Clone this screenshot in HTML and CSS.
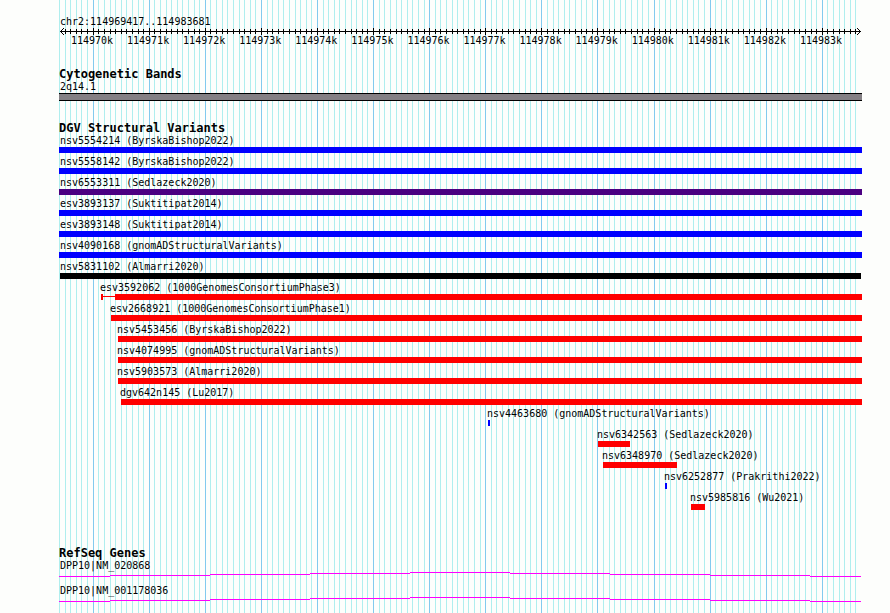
FILE: index.html
```html
<!DOCTYPE html>
<html lang="en">
<head>
<meta charset="utf-8">
<title>chr2:114969417..114983681</title>
<link rel="stylesheet" href="styles.css">
</head>
<body>
<main class="browser">
  <svg class="grid" id="grid" viewBox="0 0 803 1" preserveAspectRatio="none" aria-hidden="true"></svg>

  <header class="ruler">
    <div class="label">chr2:114969417..114983681</div>
    <svg class="axis" id="axis" viewBox="0 0 803 7" preserveAspectRatio="none" aria-hidden="true">
      <rect x="1" y="3" width="801" height="1"/>
      <path d="M2 2h1v1h-1zM3 1h1v1h-1zM4 0h1v1h-1zM2 4h1v1h-1zM3 5h1v1h-1zM4 6h1v1h-1z"/>
      <path d="M800 2h1v1h-1zM799 1h1v1h-1zM798 0h1v1h-1zM800 4h1v1h-1zM799 5h1v1h-1zM798 6h1v1h-1z"/>
    </svg>
    <div class="scale">
      <span>114970k</span><span>114971k</span><span>114972k</span><span>114973k</span><span>114974k</span><span>114975k</span><span>114976k</span><span>114977k</span><span>114978k</span><span>114979k</span><span>114980k</span><span>114981k</span><span>114982k</span><span>114983k</span>
    </div>
  </header>

  <section class="track">
    <h2>Cytogenetic Bands</h2>
    <div class="label">2q14.1</div>
    <div class="band"></div>
  </section>

  <section class="track">
    <h2>DGV Structural Variants</h2>
    <ul class="variants">
      <li style="--start:0;--len:803"><div class="label">nsv5554214 (ByrskaBishop2022)</div><div class="bar blue"></div></li>
      <li style="--start:0;--len:803"><div class="label">nsv5558142 (ByrskaBishop2022)</div><div class="bar blue"></div></li>
      <li style="--start:0;--len:803"><div class="label">nsv6553311 (Sedlazeck2020)</div><div class="bar indigo"></div></li>
      <li style="--start:0;--len:803"><div class="label">esv3893137 (Suktitipat2014)</div><div class="bar blue"></div></li>
      <li style="--start:0;--len:803"><div class="label">esv3893148 (Suktitipat2014)</div><div class="bar blue"></div></li>
      <li style="--start:0;--len:803"><div class="label">nsv4090168 (gnomADStructuralVariants)</div><div class="bar blue"></div></li>
      <li style="--start:1;--len:801"><div class="label">nsv5831102 (Almarri2020)</div><div class="bar black"></div></li>
      <li style="--start:42;--len:761"><div class="label">esv3592062 (1000GenomesConsortiumPhase3)</div><div class="bar ranged"><i class="cap"></i><i class="whisker"></i><i class="body red"></i></div></li>
      <li style="--start:52;--len:751"><div class="label">esv2668921 (1000GenomesConsortiumPhase1)</div><div class="bar red"></div></li>
      <li style="--start:59;--len:744"><div class="label">nsv5453456 (ByrskaBishop2022)</div><div class="bar red"></div></li>
      <li style="--start:59;--len:744"><div class="label">nsv4074995 (gnomADStructuralVariants)</div><div class="bar red"></div></li>
      <li style="--start:59;--len:744"><div class="label">nsv5903573 (Almarri2020)</div><div class="bar red"></div></li>
      <li style="--start:62;--len:741"><div class="label">dgv642n145 (Lu2017)</div><div class="bar red"></div></li>
      <li style="--start:429;--len:2"><div class="label">nsv4463680 (gnomADStructuralVariants)</div><div class="bar blue"></div></li>
      <li style="--start:539;--len:32"><div class="label">nsv6342563 (Sedlazeck2020)</div><div class="bar red"></div></li>
      <li style="--start:544;--len:74"><div class="label">nsv6348970 (Sedlazeck2020)</div><div class="bar red"></div></li>
      <li style="--start:606;--len:2"><div class="label">nsv6252877 (Prakrithi2022)</div><div class="bar blue"></div></li>
      <li style="--start:632;--len:14"><div class="label">nsv5985816 (Wu2021)</div><div class="bar red"></div></li>
    </ul>
  </section>

  <section class="track genes">
    <h2>RefSeq Genes</h2>
    <div class="label">DPP10|NM_020868</div>
    <svg class="intron" viewBox="0 0 803 5" preserveAspectRatio="none" aria-hidden="true">
      <path d="M0 4h51v1h-51zM51 3h100v1h-100zM151 2h100v1h-100zM251 1h100v1h-100zM351 0h100v1h-100zM451 1h100v1h-100zM551 2h100v1h-100zM651 3h100v1h-100zM751 4h51v1h-51z"/>
    </svg>
    <div class="label">DPP10|NM_001178036</div>
    <svg class="intron" viewBox="0 0 803 5" preserveAspectRatio="none" aria-hidden="true">
      <path d="M0 4h51v1h-51zM51 3h100v1h-100zM151 2h100v1h-100zM251 1h100v1h-100zM351 0h100v1h-100zM451 1h100v1h-100zM551 2h100v1h-100zM651 3h100v1h-100zM751 4h51v1h-51z"/>
    </svg>
  </section>
</main>
<script src="grid.js"></script>
</body>
</html>
```
FILE: styles.css
```css
* {
  box-sizing: border-box;
}

body {
  margin: 0;
  background: #fdfefc;
  color: #000;
  font: 10px/13px "DejaVu Sans Mono", "Liberation Mono", monospace;
}

.browser {
  position: relative;
  z-index: 0;
  min-height: 100vh;
  margin: 0 28px 0 59px;
  padding-top: 15px;
}

.grid {
  position: absolute;
  inset: 0;
  z-index: -1;
  width: 100%;
  height: 100%;
  shape-rendering: crispEdges;
}

.grid .minor {
  fill: #afeeee;
}

.grid .major {
  fill: #82caee;
}

.label {
  margin-left: 1px;
  white-space: nowrap;
}

.axis {
  display: block;
  width: 100%;
  height: 7px;
  shape-rendering: crispEdges;
}

.scale {
  display: grid;
  grid-template-columns: repeat(14, 1fr);
  width: calc(785 / 803 * 100%);
  margin-left: calc(5 / 803 * 100%);
  line-height: 11px;
  text-align: center;
}

.track {
  margin-top: 21px;
}

.ruler + .track {
  margin-top: 22px;
}

.genes {
  margin-top: 37px;
}

h2 {
  margin: 0;
  font-size: 12px;
  line-height: 12px;
}

.band {
  height: 8px;
  border: solid #000;
  border-width: 1px 0;
  background: #848084;
}

.variants {
  margin: 0;
  padding: 0;
  list-style: none;
}

.variants li + li {
  margin-top: 2px;
}

.variants .label {
  margin-left: max(1px, calc(var(--start) / 803 * 100% - 1px));
}

.bar {
  width: calc(var(--len) / 803 * 100%);
  height: 6px;
  margin-left: calc(var(--start) / 803 * 100%);
}

.blue {
  background: #00f;
}

.indigo {
  background: #4b0082;
}

.black {
  background: #000;
}

.red {
  background: #f00;
}

.ranged {
  display: flex;
}

.cap {
  width: 2px;
  background: #f00;
}

.whisker {
  width: 12px;
  height: 1px;
  margin-top: 2px;
  background: #f00;
}

.body {
  flex: 1;
}

.intron {
  display: block;
  width: 100%;
  height: 5px;
  margin-bottom: 7px;
  fill: #f0f;
  shape-rendering: crispEdges;
}
```
FILE: grid.js
```js
// Draws one grid line and one ruler tick per 100 bases, with a major one per 1000.
const START = 114969417;
const END = 114983681;
const SPAN = 800;
const OFFSET = 60;
const PAD = 59;

function addRect(parent, x, y, height, className) {
  const rect = document.createElementNS("http://www.w3.org/2000/svg", "rect");
  rect.setAttribute("x", x);
  rect.setAttribute("y", y);
  rect.setAttribute("width", 1);
  rect.setAttribute("height", height);
  rect.setAttribute("class", className);
  parent.appendChild(rect);
}

const grid = document.getElementById("grid");
const axis = document.getElementById("axis");

for (let base = 114969400; base <= END; base += 100) {
  const x = Math.round(OFFSET + (base - START) * SPAN / (END - START + 1)) - PAD;
  const major = base % 1000 === 0;
  addRect(grid, x, 0, 1, major ? "major" : "minor");
  if (base > START) {
    addRect(axis, x, major ? 0 : 1, major ? 7 : 5, "tick");
  }
}
```
